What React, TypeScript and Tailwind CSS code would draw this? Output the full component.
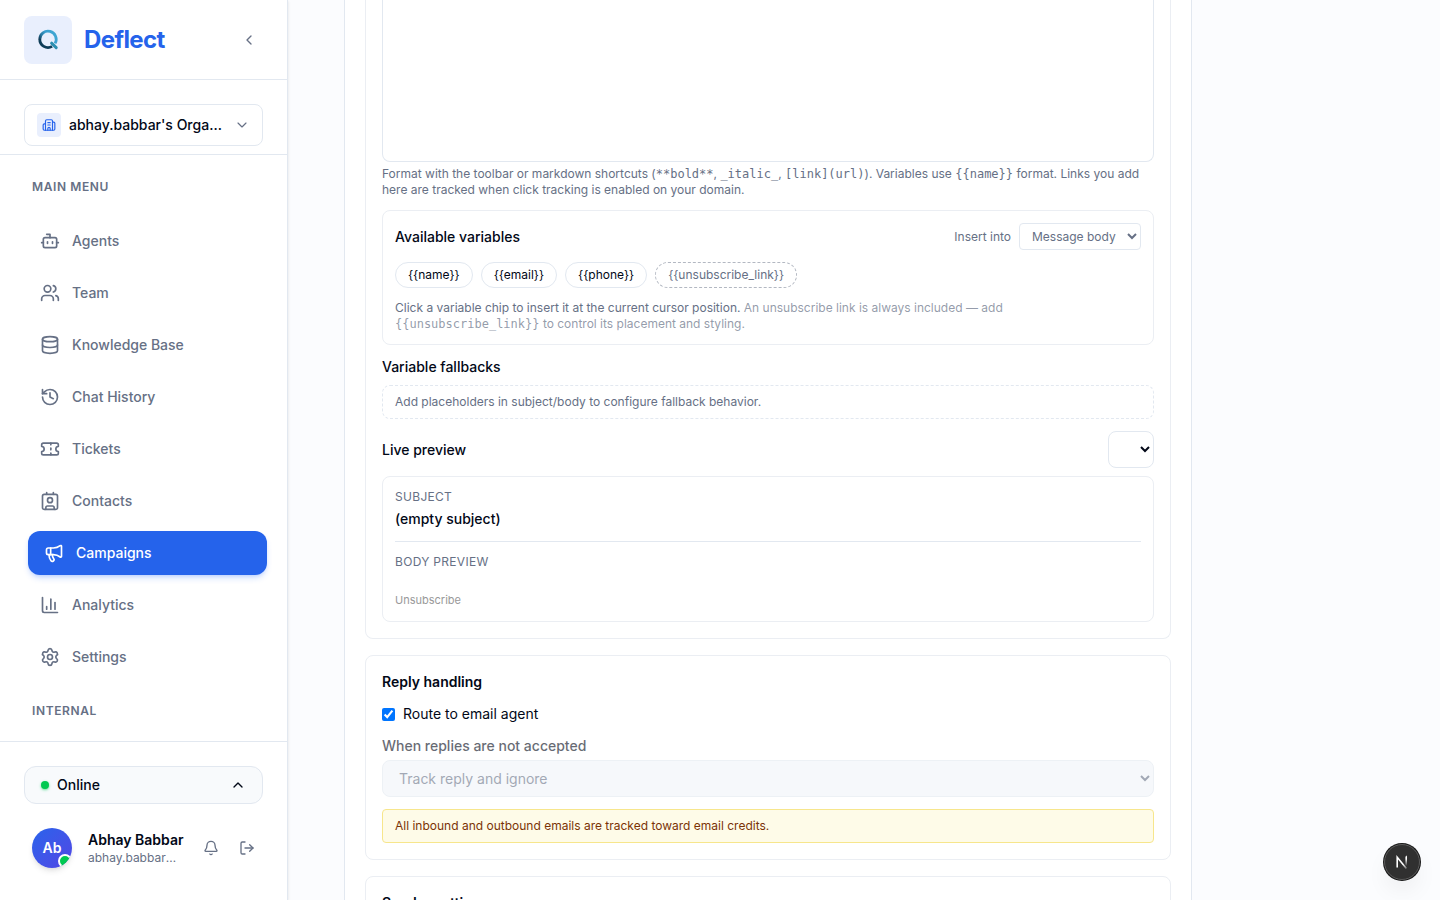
import { useState } from "react";
import type { ReactNode } from "react";
import {
  Bell,
  Bot,
  Building2,
  ChartColumn,
  ChevronDown,
  ChevronLeft,
  ChevronUp,
  Contact,
  Database,
  History,
  LogOut,
  Megaphone,
  Settings,
  Ticket,
  Users,
  type LucideIcon,
} from "lucide-react";

const navItems: { label: string; icon: LucideIcon; active?: boolean }[] = [
  { label: "Agents", icon: Bot },
  { label: "Team", icon: Users },
  { label: "Knowledge Base", icon: Database },
  { label: "Chat History", icon: History },
  { label: "Tickets", icon: Ticket },
  { label: "Contacts", icon: Contact },
  { label: "Campaigns", icon: Megaphone, active: true },
  { label: "Analytics", icon: ChartColumn },
  { label: "Settings", icon: Settings },
];

function Logo() {
  return (
    <svg viewBox="0 0 24 24" className="size-6" fill="none" aria-hidden="true">
      <defs>
        <linearGradient id="ring" x1="4" y1="14" x2="18" y2="5" gradientUnits="userSpaceOnUse">
          <stop offset="0" stopColor="#0b2c45" />
          <stop offset="0.3" stopColor="#2a7ba3" />
          <stop offset="0.6" stopColor="#3a9fcf" />
          <stop offset="1" stopColor="#3fa6d2" />
        </linearGradient>
      </defs>
      <path d="M3.8 11.3A8.2 8.2 0 1 1 19.1 15.4" stroke="url(#ring)" strokeWidth="2.8" />
      <path d="M3.8 11A8.2 8.2 0 0 0 16.1 18.4" stroke="#0f3d58" strokeWidth="2.8" />
      <path d="M15.6 15.2L20.2 19.6" stroke="#2c8fb0" strokeWidth="3" strokeLinecap="round" />
    </svg>
  );
}

function Sidebar() {
  return (
    <aside className="z-10 flex w-72 shrink-0 flex-col border-r border-slate-200 bg-white shadow-sm">
      <div className="flex h-20 shrink-0 items-center justify-between border-b border-slate-200 px-6">
        <div className="flex items-center gap-3">
          <div className="flex size-12 items-center justify-center rounded-lg bg-[#e9effd]">
            <Logo />
          </div>
          <span className="text-2xl font-bold tracking-tight text-[#2563eb]">Deflect</span>
        </div>
        <button type="button" aria-label="Collapse sidebar" className="p-1.5 text-[#667085]">
          <ChevronLeft className="size-4" />
        </button>
      </div>

      <div className="border-b border-slate-200 px-6 pt-6 pb-2">
        <button
          type="button"
          className="flex w-full items-center gap-2 rounded-lg border border-slate-200 px-3 py-2 text-left"
        >
          <span className="flex size-6 shrink-0 items-center justify-center rounded bg-[#e9effd] text-[#2563eb]">
            <Building2 className="size-3.5" />
          </span>
          <span className="min-w-0 flex-1 truncate text-sm font-medium">
            abhay.babbar's Organization
          </span>
          <ChevronDown className="ml-1 size-4 shrink-0 text-[#667085]" strokeWidth={1.75} />
        </button>
      </div>

      <nav className="min-h-0 flex-1 overflow-hidden px-6 pt-6">
        <h2 className="px-2 text-xs leading-4 font-semibold tracking-wider text-[#667085]">MAIN MENU</h2>
        <ul className="mt-6 flex flex-col gap-2">
          {navItems.map(({ label, icon: Icon, active }) => (
            <li key={label}>
              <a
                href="#"
                aria-current={active ? "page" : undefined}
                className={
                  active
                    ? "flex h-11 translate-x-1 items-center gap-3 rounded-xl bg-[#2563eb] px-4 text-sm font-medium text-white shadow-md shadow-blue-600/20"
                    : "flex h-11 items-center gap-3 rounded-xl px-4 text-sm font-medium text-[#667085]"
                }
              >
                <Icon className="size-5" />
                {label}
              </a>
            </li>
          ))}
        </ul>
        <h2 className="mt-6 px-2 text-xs leading-4 font-semibold tracking-wider text-[#667085]">INTERNAL</h2>
      </nav>

      <div className="border-t border-slate-200 p-6">
        <button
          type="button"
          className="flex w-full items-center gap-2 rounded-xl border border-slate-200 bg-slate-50 px-4 py-2 text-sm font-medium"
        >
          <span className="size-2 rounded-full bg-green-500 shadow-sm shadow-green-500/50" />
          <span className="flex-1 text-left">Online</span>
          <ChevronUp className="size-4" />
        </button>
        <div className="mt-4 flex items-center p-2">
          <div className="relative flex size-10 shrink-0 items-center justify-center overflow-hidden rounded-full bg-linear-to-br from-[#2563eb] to-[#4f46e5] text-sm font-semibold text-white shadow-md">
            Ab
            <span className="absolute right-0 bottom-0 size-3.5 rounded-full border-2 border-white bg-green-500" />
          </div>
          <div className="ml-4 min-w-0 flex-1">
            <p className="text-sm leading-5 font-semibold whitespace-nowrap">Abhay Babbar</p>
            <p className="w-24 truncate text-xs leading-4 text-[#667085]">abhay.babbar@deflect.ai</p>
          </div>
          <div className="flex gap-5 text-[#667085]">
            <button type="button" aria-label="Notifications">
              <Bell className="size-4" />
            </button>
            <button type="button" aria-label="Log out">
              <LogOut className="size-4" />
            </button>
          </div>
        </div>
      </div>
    </aside>
  );
}

function Mono({ children }: { children: ReactNode }) {
  return <code className="font-['DejaVu_Sans_Mono',monospace]">{children}</code>;
}

function MessageSection() {
  const [body, setBody] = useState("");
  return (
    <section className="rounded-b-lg border border-t-0 border-[#ebeef3] px-4 pb-4">
      <textarea
        aria-label="Message body"
        value={body}
        onChange={(e) => setBody(e.target.value)}
        className="block h-[162px] w-full resize-none rounded-b-lg border border-t-0 border-slate-200 px-3 text-sm"
      />
      <p className="mt-1 text-xs leading-4 text-[#667085]">
        Format with the toolbar or markdown shortcuts (<Mono>**bold**</Mono>, <Mono>_italic_</Mono>,{" "}
        <Mono>[link](url)</Mono>). Variables use <Mono>{"{{name}}"}</Mono> format. Links you add here are
        tracked when click tracking is enabled on your domain.
      </p>

      <div className="mt-3 rounded-lg border border-[#ebeef3] p-3">
        <div className="flex items-center justify-between">
          <h3 className="text-sm font-medium">Available variables</h3>
          <label className="flex items-center gap-2 text-xs text-[#667085]">
            Insert into
            <select className="h-[27px] rounded border border-slate-200 bg-white px-2 text-xs">
              <option>Message body</option>
              <option>Subject</option>
            </select>
          </label>
        </div>
        <div className="mt-3 flex flex-wrap gap-2 text-xs leading-4">
          {["{{name}}", "{{email}}", "{{phone}}"].map((v) => (
            <button key={v} type="button" className="rounded-full border border-slate-200 px-3 py-1">
              {v}
            </button>
          ))}
          <button
            type="button"
            className="rounded-full border border-dashed border-[#b3b8c2] px-3 py-1 text-[#667085]"
          >
            {"{{unsubscribe_link}}"}
          </button>
        </div>
        <p className="mt-3 text-xs leading-4 text-[#667085]">
          Click a variable chip to insert it at the current cursor position.{" "}
          <span className="text-[#667085]/70">
            An unsubscribe link is always included — add <Mono>{"{{unsubscribe_link}}"}</Mono> to control its
            placement and styling.
          </span>
        </p>
      </div>

      <h3 className="mt-3 text-sm leading-5 font-medium">Variable fallbacks</h3>
      <p className="mt-2 rounded-lg border border-dashed border-slate-200 px-3 py-2 text-xs leading-4 text-[#667085]">
        Add placeholders in subject/body to configure fallback behavior.
      </p>

      <div className="mt-3 flex items-center justify-between">
        <h3 className="text-sm font-medium">Live preview</h3>
        <select
          aria-label="Preview contact"
          className="h-[37px] rounded-lg border border-slate-200 bg-white px-3 text-sm"
        />
      </div>
      <div className="mt-2 rounded-lg border border-[#ebeef3] p-3">
        <p className="text-xs leading-4 tracking-wide text-[#667085]">SUBJECT</p>
        <p className="mt-1 text-sm leading-5 font-medium">(empty subject)</p>
        <hr className="my-3 border-slate-200" />
        <p className="text-xs leading-4 tracking-wide text-[#667085]">BODY PREVIEW</p>
        <p className="mt-[22px] text-[11px] leading-[17px] text-[#999999]">Unsubscribe</p>
      </div>
    </section>
  );
}

function ReplySection() {
  const [routed, setRouted] = useState(true);
  return (
    <section className="rounded-lg border border-[#ebeef3] p-4">
      <h2 className="text-sm leading-5 font-semibold">Reply handling</h2>
      <label className="mt-3 flex items-center gap-2 text-sm leading-5">
        <input type="checkbox" checked={routed} onChange={(e) => setRouted(e.target.checked)} />
        Route to email agent
      </label>
      <label htmlFor="no-reply-mode" className="mt-3 block text-sm leading-5 font-medium opacity-60">
        When replies are not accepted
      </label>
      <select
        id="no-reply-mode"
        disabled={routed}
        className="mt-1 block h-[37px] w-full rounded-lg border border-slate-200 bg-slate-100 px-3 text-sm text-[#667085] opacity-60"
      >
        <option>Track reply and ignore</option>
      </select>
      <p className="mt-3 rounded border border-[#f7e68c] bg-[#fefbe8] px-3 py-2 text-xs leading-4 text-[#7b3306]">
        All inbound and outbound emails are tracked toward email credits.
      </p>
    </section>
  );
}

export default function App() {
  return (
    <div className="flex h-screen overflow-hidden bg-[#fbfcfe] font-['Inter',sans-serif] text-[#020817]">
      <Sidebar />
      <main className="min-w-0 flex-1 overflow-hidden px-14">
        <div className="flex max-w-[848px] flex-col gap-4 border-x border-slate-200 bg-white px-5">
          <MessageSection />
          <ReplySection />
          <section className="rounded-t-lg border border-[#ebeef3] p-4">
            <h2 className="text-sm leading-5 font-semibold">Sender settings</h2>
          </section>
        </div>
      </main>
      <button
        type="button"
        aria-label="Open developer tools"
        className="fixed right-5 bottom-5 z-20 flex size-9 items-center justify-center rounded-full border border-[#5b5b5b] bg-[#303030] shadow-[0_0_0_1px_#171717,0_12px_24px_-4px_rgba(0,0,0,0.08)]"
      >
        <svg viewBox="0 0 16 16" className="size-4" fill="none" aria-hidden="true">
          <defs>
            <linearGradient id="stem" x1="0" y1="2" x2="0" y2="12" gradientUnits="userSpaceOnUse">
              <stop offset="0.3" stopColor="#fff" />
              <stop offset="1" stopColor="#fff" stopOpacity="0" />
            </linearGradient>
            <linearGradient id="slash" x1="3" y1="3" x2="13" y2="15" gradientUnits="userSpaceOnUse">
              <stop offset="0.6" stopColor="#fff" />
              <stop offset="1" stopColor="#fff" stopOpacity="0.2" />
            </linearGradient>
          </defs>
          <path d="M3.2 13.5V3.2L12.4 14.4" stroke="url(#slash)" strokeWidth="1.6" />
          <path d="M12.2 2.5h.01V12" stroke="url(#stem)" strokeWidth="1.6" />
        </svg>
      </button>
    </div>
  );
}
